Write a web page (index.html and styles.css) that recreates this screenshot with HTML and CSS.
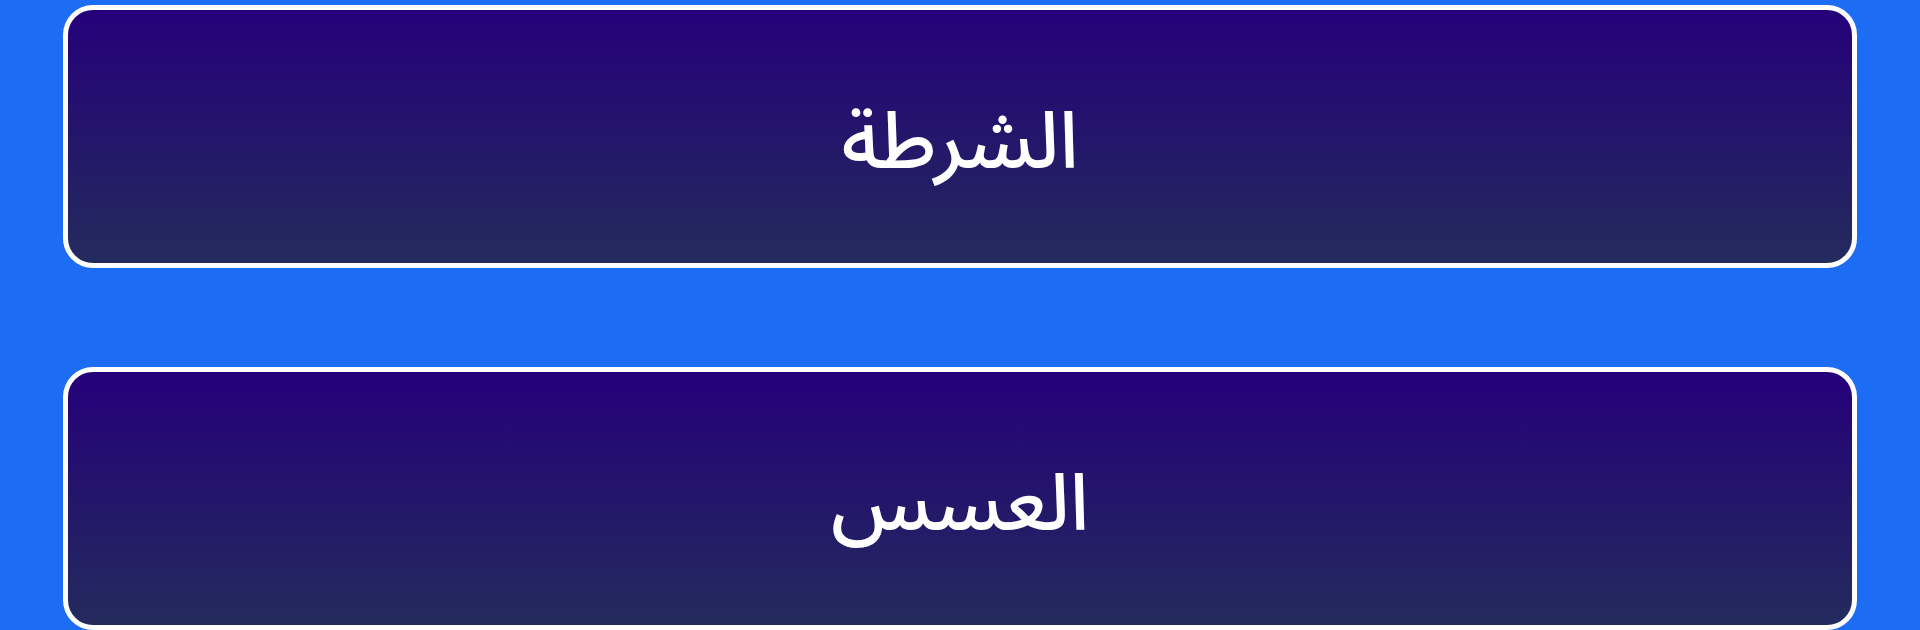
FILE: index.html
```html
<!DOCTYPE html>
<html lang="ar" dir="rtl">
<head>
<meta charset="utf-8">
<link rel="stylesheet" href="styles.css">
</head>
<body>
<div class="menu">
  <div class="btn"><span class="label">الشرطة</span></div>
  <div class="btn"><span class="label">العسس</span></div>
</div>
</body>
</html>
```
FILE: styles.css
```css
html, body {
  margin: 0;
  padding: 0;
  height: 100%;
  overflow: hidden;
}
body {
  background: #1c6cf4;
  font-family: "Noto Sans Arabic", "Noto Sans", sans-serif;
}
.menu {
  display: flex;
  flex-direction: column;
  gap: 99px;
  padding: 5px 63px 0;
}
.btn {
  box-sizing: border-box;
  height: 263px;
  border: 5px solid #ffffff;
  border-radius: 30px;
  background: linear-gradient(to bottom, #25007a 0%, #232b5c 100%);
  display: flex;
  align-items: center;
  justify-content: center;
}
.label {
  color: #ffffff;
  font-size: 79px;
  font-weight: 500;
  line-height: 1;
  padding-top: 12px;
}
```
